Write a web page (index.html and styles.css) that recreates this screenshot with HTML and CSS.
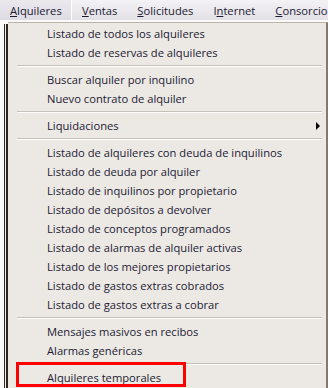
FILE: index.html
```html
<!DOCTYPE html>
<html>
<head>
<meta charset="utf-8">
<link rel="stylesheet" href="styles.css">
</head>
<body>
<div class="menubar">
  <div class="mb-item active"><u>A</u>lquileres</div>
  <div class="mb-item"><u>V</u>entas</div>
  <div class="mb-item"><u>S</u>olicitudes</div>
  <div class="mb-item">I<u>n</u>ternet</div>
  <div class="mb-item"><u>C</u>onsorcio</div>
</div>
<div class="dropdown">
  <div class="gutter"></div>
  <div class="panel">
    <div class="row">Listado de todos los alquileres</div>
    <div class="row">Listado de reservas de alquileres</div>
    <div class="sep"></div>
    <div class="row">Buscar alquiler por inquilino</div>
    <div class="row">Nuevo contrato de alquiler</div>
    <div class="sep"></div>
    <div class="row sub">Liquidaciones<span class="arrow"></span></div>
    <div class="sep"></div>
    <div class="row">Listado de alquileres con deuda de inquilinos</div>
    <div class="row">Listado de deuda por alquiler</div>
    <div class="row">Listado de inquilinos por propietario</div>
    <div class="row">Listado de depósitos a devolver</div>
    <div class="row">Listado de conceptos programados</div>
    <div class="row">Listado de alarmas de alquiler activas</div>
    <div class="row">Listado de los mejores propietarios</div>
    <div class="row">Listado de gastos extras cobrados</div>
    <div class="row">Listado de gastos extras a cobrar</div>
    <div class="sep"></div>
    <div class="row">Mensajes masivos en recibos</div>
    <div class="row">Alarmas genéricas</div>
    <div class="sep"></div>
    <div class="row marked">Alquileres temporales</div>
  </div>
</div>
</body>
</html>
```
FILE: styles.css
```css
html, body {
  margin: 0;
  padding: 0;
  background: #fbfaf8;
  width: 328px;
  height: 388px;
  overflow: hidden;
  font-family: "Open Sans", "DejaVu Sans", sans-serif;
  font-size: 11.2px;
  color: #1d1a33;
}
.menubar {
  height: 20px;
  display: flex;
  align-items: center;
  background: linear-gradient(#f3f2f4, #e3e0e6);
  white-space: nowrap;
  overflow: hidden;
}
.mb-item {
  height: 20px;
  line-height: 21px;
  padding: 0 10px;
  box-sizing: border-box;
}
.mb-item.active {
  width: 72px;
  background: linear-gradient(#ebe9ee, #dedbe3);
  border-right: 1px solid #ffffff;
}
.dropdown {
  display: flex;
  margin-top: 2px;
  height: 366px;
}
.gutter {
  margin-left: 4px;
  margin-top: 2px;
  width: 1px;
  background: #f4f2ef;
  border-left: 1px solid #2d251f;
  border-right: 2px solid #2d251f;
}
.panel {
  flex: 1;
  background: #ece9e5;
  border-top: 1px solid #b9b3ab;
  border-right: 2px solid #857a70;
  padding-top: 1px;
}
.row {
  position: relative;
  height: 19px;
  line-height: 19px;
  padding-left: 39px;
  white-space: nowrap;
}
.sub .arrow {
  position: absolute;
  right: 6px;
  top: 6px;
  width: 0;
  height: 0;
  border-left: 4px solid #000;
  border-top: 4px solid transparent;
  border-bottom: 4px solid transparent;
}
.sep {
  height: 8px;
  display: flex;
  flex-direction: column;
  justify-content: center;
  margin: 0 4px 0 9px;
}
.sep::before {
  content: "";
  display: block;
  height: 1px;
  background: #c5c0b9;
  border-bottom: 1px solid #ffffff;
}
.marked::after {
  content: "";
  position: absolute;
  left: 8px;
  top: -6px;
  width: 164px;
  height: 19px;
  border: 3px solid #ff0000;
}
```
